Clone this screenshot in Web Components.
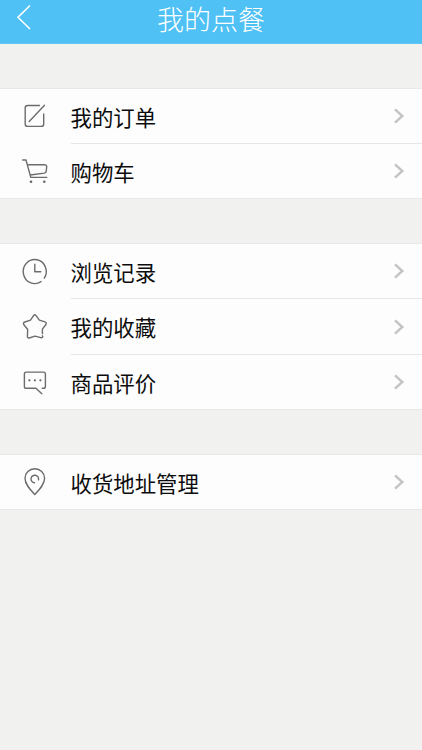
<!DOCTYPE html>
<html lang="zh-CN">
<head>
<meta charset="utf-8">
<title>我的点餐</title>
<style>
html,body{margin:0;height:100%;background:#f1f1f0}
body{font-family:"Noto Sans CJK SC",sans-serif;color:#0c0c0c;overflow:hidden}
</style>
</head>
<body>
<order-page>
  <title-bar slot="header">我的点餐</title-bar>
  <menu-group>
    <menu-row icon="edit">我的订单</menu-row>
    <menu-row icon="cart">购物车</menu-row>
  </menu-group>
  <menu-group>
    <menu-row icon="clock">浏览记录</menu-row>
    <menu-row icon="star">我的收藏</menu-row>
    <menu-row icon="chat">商品评价</menu-row>
  </menu-group>
  <menu-group>
    <menu-row icon="pin">收货地址管理</menu-row>
  </menu-group>
</order-page>
<script>
const define = (name, html, setup) => customElements.define(name, class extends HTMLElement {
  constructor() {
    super();
    this.attachShadow({mode: 'open'}).innerHTML = html;
  }
  connectedCallback() { if (setup) setup(this); }
});

define('order-page', `
<style>
:host{display:flex;flex-direction:column;height:750px;background:#f1f1f0}
main{display:flex;flex-direction:column;gap:44px;padding-top:44px}
</style>
<slot name="header"></slot><main><slot></slot></main>`);

define('title-bar', `
<style>
:host{display:grid;grid-template-columns:60px 1fr 60px;height:44px;background:linear-gradient(#4fc1f5 43px,#5fc6f4 43px);color:#fff;flex:none}
svg{display:block;width:60px;height:44px}
h1{margin:0;text-align:center;font-size:27px;font-weight:300;line-height:37px;height:44px;white-space:nowrap}
</style>
<svg viewBox="0 0 60 44" fill="none" stroke="#fff" stroke-width="1.6"><path d="M30 5.5 18 17.3 30 29"/></svg>
<h1><slot></slot></h1>`);

define('menu-group', `
<style>
:host{display:block;background:#fdfdfd;border-top:1px solid #e8e8e8;border-bottom:1px solid #e8e8e8}
::slotted(menu-row:not(:last-child)){--line:1px}
</style>
<slot></slot>`);

const icons = {
  edit: '<path d="M21.5 7.5H9.7Q7.2 7.5 7.2 10V25.9Q7.2 28.4 9.7 28.4H23.2Q25.7 28.4 25.7 25.9V16M11.2 23.4 26.5 7.2"/>',
  cart: '<path d="M4.7 7H8L12.8 24.4H28.7M10.6 11.7H26.3Q28.9 11.7 28.7 13.8L28.2 18.3Q28 19.8 26.3 20.1L12.2 22"/><g fill="#666" stroke="none"><circle cx="13" cy="28.8" r="1.3"/><circle cx="26.3" cy="28.8" r="1.3"/></g>',
  clock: '<path d="M23 28.6A11.5 12 0 1 1 26.3 25.2M16.8 11.2V18.7H22.8"/>',
  star: '<path d="M24.4 27.8 24.8 28.6Q24.5 30 22.8 29.7L17 28.1 11.2 30Q9.2 30.1 9.4 28.2L9.7 21.5 5.7 16.5Q4.9 14.7 6.8 14L12.5 12.2 15.7 7.4Q16.8 6 17.9 7.4L21.4 12.1 27 13.8Q29 14.7 27.9 16.5L24.4 21.2V25.8"/>',
  chat: '<path d="M24.3 24.3H25.5Q27.4 24.3 27.4 22.4V10Q27.4 8.1 25.5 8.1H8.3Q6.4 8.1 6.4 10V22.4Q6.4 24.3 8.3 24.3H18L23.8 29.7"/><g fill="#666" stroke="none"><circle cx="11.4" cy="16.3" r="1.1"/><circle cx="16.9" cy="16.3" r="1.1"/><circle cx="22.4" cy="16.3" r="1.1"/></g>',
  pin: '<path d="M16.8 30.6C12 25.5 7 20.3 7 14.3A9.8 9.5 0 0 1 26.6 14.3C26.6 20.3 21.5 25.5 16.8 30.6ZM16.5 18.8A3.8 3.8 0 1 1 20.5 15.9"/>'
};

define('menu-row', `
<style>
:host{display:flex;align-items:stretch;height:calc(54px + var(--line,0px));padding-left:18px}
:host(:not(:first-child):not(:last-child)){height:56px}
.icon{width:36px;height:36px;margin:9px 17px 0 0;flex:none}
.body{flex:1;display:flex;align-items:center;justify-content:space-between;border-bottom:var(--line,0px) solid #e6e6e6;padding-right:17px}
.label{font-size:21.4px;line-height:32px;font-weight:400;white-space:nowrap;padding-top:1px;margin-left:-.5px}
.arrow{width:12px;height:18px}
</style>
<svg class="icon" viewBox="0 0 36 36" fill="none" stroke="#6c6c6c" stroke-width="1.4" stroke-linecap="round" stroke-linejoin="round"></svg>
<div class="body"><span class="label"><slot></slot></span>
<svg class="arrow" viewBox="0 0 12 18" fill="none" stroke="#c4c4c4" stroke-width="2.5"><path d="M2 2.3 9.3 9 2 15.7"/></svg></div>`,
el => { el.shadowRoot.querySelector('.icon').innerHTML = icons[el.getAttribute('icon')]; });
</script>
</body>
</html>
